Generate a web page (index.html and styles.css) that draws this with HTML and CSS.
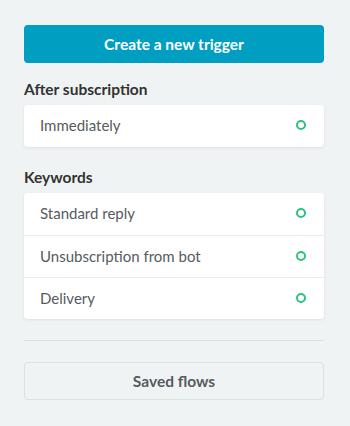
FILE: index.html
```html
<!DOCTYPE html>
<html lang="en">
<head>
    <meta charset="UTF-8">
    <meta name="viewport" content="width=device-width, initial-scale=1.0">
    <title>Triggers</title>
    <link rel="stylesheet" href="styles.css">
</head>
<body>
    <div class="panel">
        <button class="btn-primary">Create a new trigger</button>

        <h3 class="section-title">After subscription</h3>
        <ul class="card">
            <li class="card-row"><span>Immediately</span><i class="status"></i></li>
        </ul>

        <h3 class="section-title">Keywords</h3>
        <ul class="card">
            <li class="card-row"><span>Standard reply</span><i class="status"></i></li>
            <li class="card-row"><span>Unsubscription from bot</span><i class="status"></i></li>
            <li class="card-row"><span>Delivery</span><i class="status"></i></li>
        </ul>

        <hr class="divider">

        <button class="btn-outline">Saved flows</button>
    </div>
</body>
</html>
```

FILE: styles.css
```css
body {
    font-family: 'Lato', 'Noto Sans', sans-serif;
    background: #f0f3f4;
    color: #333;
    margin: 0;
    padding: 0;
}

.panel {
    padding: 25px 26px 25px 24px;
    display: flex;
    flex-direction: column;
}

button {
    font-family: inherit;
    font-weight: 700;
    font-size: 15.5px;
    height: 38px;
    width: 100%;
    border-radius: 4px;
    cursor: pointer;
}

.btn-primary {
    background: #009fc2;
    color: #fff;
    border: none;
}

.btn-outline {
    background: #f0f3f4;
    color: #555b60;
    border: 1px solid #d6e3e1;
}

.section-title {
    font-size: 15.5px;
    font-weight: 700;
    line-height: 20px;
    color: #333;
    margin: 16px 0 6px;
}

.card + .section-title {
    margin-top: 20px;
}

.card {
    list-style: none;
    margin: 0;
    padding: 0;
    background: #fff;
    border-radius: 4px;
    box-shadow: 0 1px 3px rgba(0, 0, 0, 0.08);
}

.card-row {
    box-sizing: border-box;
    display: flex;
    align-items: center;
    justify-content: space-between;
    height: 42px;
    padding: 0 18px 2px 16px;
    font-size: 15px;
    color: #555b60;
}

.card-row + .card-row {
    border-top: 1px solid #e6ebec;
}

.status {
    width: 6px;
    height: 6px;
    border: 2px solid #2ec27e;
    border-radius: 50%;
}

.divider {
    border: none;
    border-top: 1px solid #d6e3e1;
    margin: 21px 0 21px;
}
```
